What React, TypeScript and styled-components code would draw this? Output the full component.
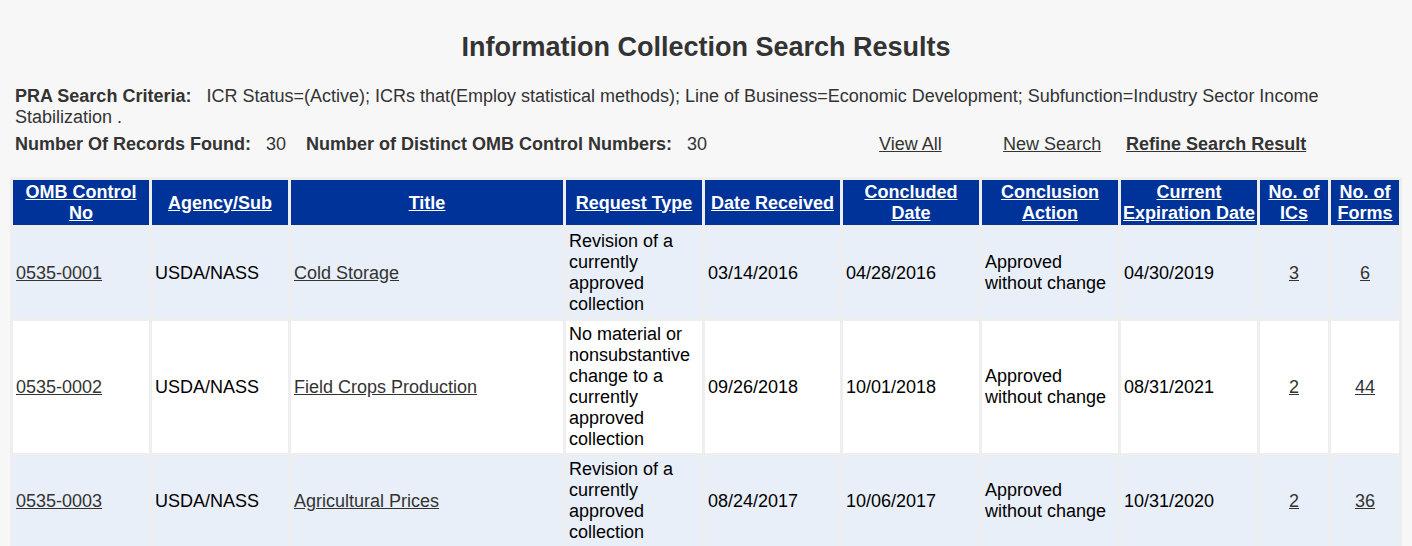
import React from "react";
import styled, { createGlobalStyle } from "styled-components";

const GlobalStyle = createGlobalStyle`
  html, body {
    margin: 0;
    padding: 0;
    background: #f7f7f7;
    overflow: hidden;
  }
  body {
    font-family: "Liberation Sans", Arial, sans-serif;
    color: #333;
  }
`;

const Page = styled.main`
  padding: 32px 10px 0;
`;

const Title = styled.h1`
  margin: 0;
  text-align: center;
  font-size: 27px;
  line-height: 31px;
  font-weight: 700;
  color: #333;
`;

const Summary = styled.section`
  margin-top: 23px;
  padding: 0 5px;
  font-size: 18px;
  line-height: 21px;
  color: #333;
`;

const Criteria = styled.p`
  margin: 0;
`;

const Label = styled.strong`
  font-weight: 700;
  margin-right: 15px;
`;

const Stats = styled.div`
  display: flex;
  align-items: baseline;
  margin-top: 6px;
`;

const StatValue = styled.span`
  margin-right: 20px;
`;

const Actions = styled.nav`
  display: grid;
  grid-template-columns: 124px 123px auto;
  margin-left: 152px;
`;

const ActionLink = styled.a<{ $strong?: boolean }>`
  color: #333;
  text-decoration: underline;
  font-weight: ${(p) => (p.$strong ? 700 : 400)};
  cursor: pointer;
`;

const Table = styled.table`
  margin-top: 22px;
  width: 100%;
  table-layout: fixed;
  border-collapse: separate;
  border-spacing: 3px;
  background: #eeeeee;
  font-size: 18px;
  line-height: 21px;
  color: #000;
`;

const Col = styled.col<{ $w: number }>`
  width: ${(p) => p.$w}px;
`;

const Th = styled.th`
  background: #003399;
  color: #fff;
  padding: 2px 0 1px;
  font-weight: 700;
  text-align: center;
  vertical-align: middle;
`;

const HeadLink = styled.a`
  color: #fff;
  text-decoration: underline;
  cursor: pointer;
`;

const Row = styled.tr<{ $shaded: boolean }>`
  & > td {
    background: ${(p) => (p.$shaded ? "#e8eff8" : "#ffffff")};
  }
`;

const Td = styled.td<{ $center?: boolean }>`
  padding: 3px;
  vertical-align: middle;
  text-align: ${(p) => (p.$center ? "center" : "left")};
`;

const CellLink = styled.a`
  color: #333;
  text-decoration: underline;
  cursor: pointer;
`;

const columns = [
  { label: "OMB Control No", w: 136 },
  { label: "Agency/Sub", w: 136 },
  { label: "Title", w: 272 },
  { label: "Request Type", w: 136 },
  { label: "Date Received", w: 135 },
  { label: "Concluded Date", w: 136 },
  { label: "Conclusion Action", w: 136 },
  { label: "Current Expiration Date", w: 136 },
  { label: "No. of ICs", w: 68 },
  { label: "No. of Forms", w: 68 },
];

const rows = [
  {
    omb: "0535-0001",
    agency: "USDA/NASS",
    title: "Cold Storage",
    type: "Revision of a currently approved collection",
    received: "03/14/2016",
    concluded: "04/28/2016",
    action: "Approved without change",
    expiration: "04/30/2019",
    ics: "3",
    forms: "6",
  },
  {
    omb: "0535-0002",
    agency: "USDA/NASS",
    title: "Field Crops Production",
    type: "No material or nonsubstantive change to a currently approved collection",
    received: "09/26/2018",
    concluded: "10/01/2018",
    action: "Approved without change",
    expiration: "08/31/2021",
    ics: "2",
    forms: "44",
  },
  {
    omb: "0535-0003",
    agency: "USDA/NASS",
    title: "Agricultural Prices",
    type: "Revision of a currently approved collection",
    received: "08/24/2017",
    concluded: "10/06/2017",
    action: "Approved without change",
    expiration: "10/31/2020",
    ics: "2",
    forms: "36",
  },
];

export default function App() {
  return (
    <>
      <GlobalStyle />
      <Page>
        <Title>Information Collection Search Results</Title>
        <Summary>
          <Criteria>
            <Label>PRA Search Criteria:</Label>
            ICR Status=(Active); ICRs that(Employ statistical methods); Line of
            Business=Economic Development; Subfunction=Industry Sector Income
            Stabilization .
          </Criteria>
          <Stats>
            <Label>Number Of Records Found:</Label>
            <StatValue>30</StatValue>
            <Label>Number of Distinct OMB Control Numbers:</Label>
            <StatValue>30</StatValue>
            <Actions>
              <span>
                <ActionLink>View All</ActionLink>
              </span>
              <span>
                <ActionLink>New Search</ActionLink>
              </span>
              <span>
                <ActionLink $strong>Refine Search Result</ActionLink>
              </span>
            </Actions>
          </Stats>
        </Summary>
        <Table>
          <colgroup>
            {columns.map((c) => (
              <Col key={c.label} $w={c.w} />
            ))}
          </colgroup>
          <thead>
            <tr>
              {columns.map((c) => (
                <Th key={c.label}>
                  <HeadLink>{c.label}</HeadLink>
                </Th>
              ))}
            </tr>
          </thead>
          <tbody>
            {rows.map((r, i) => (
              <Row key={r.omb} $shaded={i % 2 === 0}>
                <Td>
                  <CellLink>{r.omb}</CellLink>
                </Td>
                <Td>{r.agency}</Td>
                <Td>
                  <CellLink>{r.title}</CellLink>
                </Td>
                <Td>{r.type}</Td>
                <Td>{r.received}</Td>
                <Td>{r.concluded}</Td>
                <Td>{r.action}</Td>
                <Td>{r.expiration}</Td>
                <Td $center>
                  <CellLink>{r.ics}</CellLink>
                </Td>
                <Td $center>
                  <CellLink>{r.forms}</CellLink>
                </Td>
              </Row>
            ))}
          </tbody>
        </Table>
      </Page>
    </>
  );
}
